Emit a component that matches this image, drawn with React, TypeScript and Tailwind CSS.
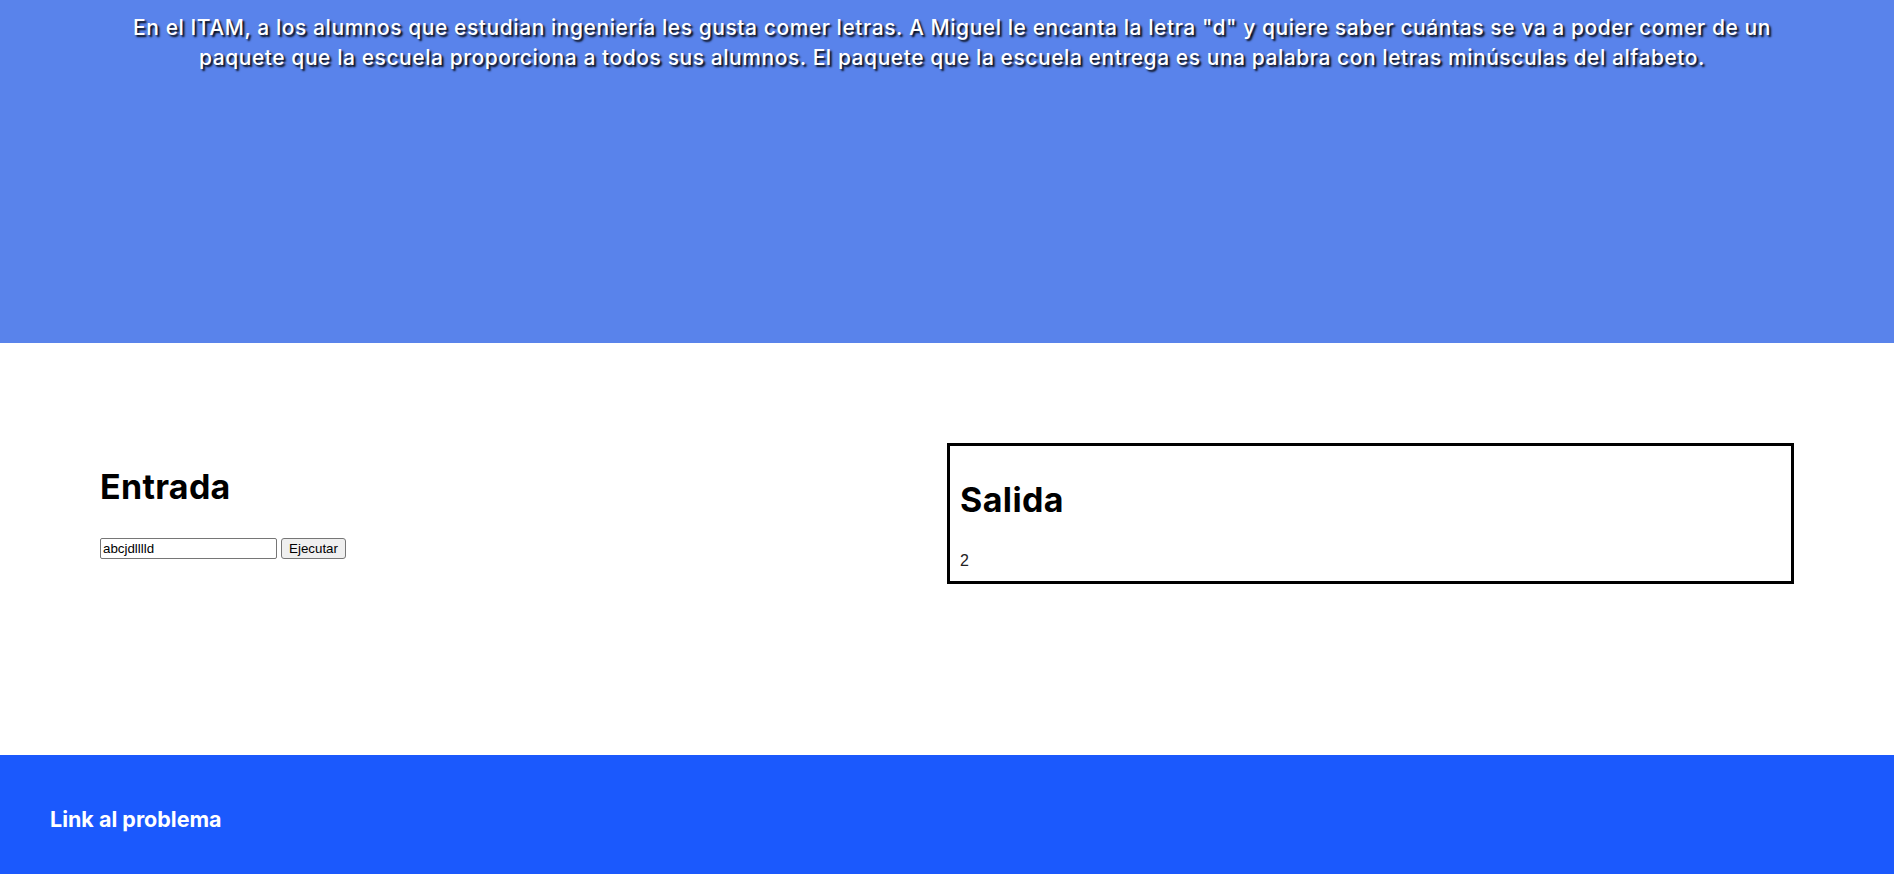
import React from "react";

export default function App() {
  return (
    <div className="w-full min-h-[874px] bg-white font-['Inter',sans-serif]">
      <header className="h-[343px] bg-[#5983eb] pl-[10px] pt-[13px] text-center text-[21px] font-medium leading-[30px] tracking-[0.56px] text-white [text-shadow:2px_2px_2px_rgba(0,0,0,0.95)]">
        <p>
          En el ITAM, a los alumnos que estudian ingeniería les gusta comer letras. A Miguel le encanta la letra "d" y quiere saber cuántas se va a poder comer de un
          <br />
          paquete que la escuela proporciona a todos sus alumnos. El paquete que la escuela entrega es una palabra con letras minúsculas del alfabeto.
        </p>
      </header>

      <main className="grid h-[412px] grid-cols-2 items-start px-[100px] pt-[100px]">
        <section className="pt-[25px]">
          <h2 className="text-[34px] font-bold leading-[38px] tracking-[0.3px] text-black">Entrada</h2>
          <form
            className="mt-[32px] flex items-center gap-[4px] font-['Liberation_Sans',Arial,sans-serif] text-[13.33px]"
            onSubmit={(e) => e.preventDefault()}
          >
            <input
              type="text"
              defaultValue="abcjdlllld"
              className="h-[21px] w-[177px] rounded-[2px] border border-[#767676] bg-white px-[2px] text-black outline-none"
            />
            <button
              type="submit"
              className="h-[21px] w-[65px] rounded-[3px] border border-[#767676] bg-[#efefef] text-black"
            >
              Ejecutar
            </button>
          </form>
        </section>

        <section className="h-[141px] border-[3px] border-black px-[10px] pt-[35px]">
          <h2 className="text-[34px] font-bold leading-[38px] tracking-[0.4px] text-black">Salida</h2>
          <p className="mt-[30px] font-['Liberation_Sans',Arial,sans-serif] text-[16px] leading-[24px] text-[#222]">2</p>
        </section>
      </main>

      <footer className="h-[119px] bg-[#1b59fd] px-[50px] pt-[54px]">
        <a className="text-[21.5px] font-bold leading-[21px] text-white">Link al problema</a>
      </footer>
    </div>
  );
}
